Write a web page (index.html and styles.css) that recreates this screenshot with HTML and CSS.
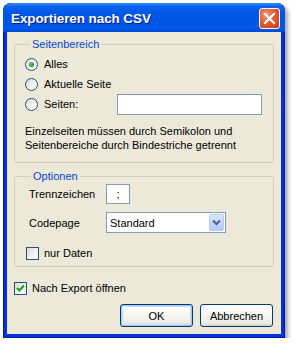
FILE: index.html
```html
<!DOCTYPE html>
<html lang="de">
<head>
<meta charset="utf-8">
<title>Exportieren nach CSV</title>
<link rel="stylesheet" href="styles.css">
</head>
<body>
<div class="window">
  <div class="titlebar">
    <span class="title">Exportieren nach CSV</span>
    <span class="close">
      <svg width="13" height="13" viewBox="0 0 13 13"><path d="M2 2 L11 11 M11 2 L2 11" stroke="#fff" stroke-width="2.2" stroke-linecap="square"/></svg>
    </span>
  </div>
  <div class="client">
    <fieldset class="group g1">
      <legend>Seitenbereich</legend>
      <div class="row"><span class="radio checked"></span><span>Alles</span></div>
      <div class="row"><span class="radio"></span><span>Aktuelle Seite</span></div>
      <div class="row"><span class="radio"></span><span class="seiten-label">Seiten:</span><span class="textbox wide"></span></div>
      <p class="hint">Einzelseiten müssen durch Semikolon und<br>Seitenbereiche durch Bindestriche getrennt</p>
    </fieldset>
    <fieldset class="group g2">
      <legend>Optionen</legend>
      <div class="opt-row"><span class="opt-label">Trennzeichen</span><span class="textbox small">;</span></div>
      <div class="opt-row combo-row"><span class="opt-label">Codepage</span>
        <span class="combo"><span class="combo-text">Standard</span>
          <span class="combo-btn"><svg width="9" height="7" viewBox="0 0 9 7"><path d="M1 1.5 L4.5 5 L8 1.5" fill="none" stroke="#4D6185" stroke-width="2"/></svg></span>
        </span>
      </div>
      <div class="check-row inner"><span class="check"></span><span>nur Daten</span></div>
    </fieldset>
    <div class="check-row outer"><span class="check"><svg width="11" height="11" viewBox="0 0 11 11"><path d="M2 5 L4.3 7.5 L9 2.5" fill="none" stroke="#21A121" stroke-width="2.2"/></svg></span><span>Nach Export öffnen</span></div>
    <div class="buttons">
      <button class="btn default">OK</button>
      <button class="btn">Abbrechen</button>
    </div>
  </div>
</div>
</body>
</html>
```
FILE: styles.css
```css
html, body {
  margin: 0;
  padding: 0;
  background: #ffffff;
}
body {
  font-family: "Liberation Sans", Arial, sans-serif;
  font-size: 11px;
  color: #000;
}
.window {
  margin: 3px 0 0 3px;
  width: 282px;
  height: 335px;
  border-radius: 8px 8px 0 0;
  background: #0831D9;
  box-shadow: 3px 3px 4px rgba(0, 0, 0, 0.35), inset 0 0 0 1px #0019A5;
  display: flex;
  flex-direction: column;
}
.titlebar {
  height: 29px;
  flex: none;
  border-radius: 8px 8px 0 0;
  background: linear-gradient(to bottom, #3D8EF8 0%, #0B63EC 12%, #0057E7 35%, #0055E5 70%, #0058EC 88%, #0246D4 100%);
  display: flex;
  align-items: center;
  justify-content: space-between;
  padding: 0 5px 0 8px;
  box-sizing: border-box;
}
.title {
  color: #fff;
  font-weight: bold;
  font-size: 13.5px;
  letter-spacing: -0.1px;
  text-shadow: 1px 1px 0 #0A1883;
  margin-top: 1px;
}
.close {
  width: 21px;
  height: 21px;
  box-sizing: border-box;
  border: 1px solid #fff;
  border-radius: 3px;
  background: radial-gradient(circle at 35% 30%, #F29B7E 0%, #E35A32 45%, #C8391A 100%);
  display: flex;
  align-items: center;
  justify-content: center;
  margin-top: 2px;
}
.close svg { display: block; }
.client {
  flex: 1;
  margin: 0 4px 4px 4px;
  background: #ECE9D8;
  padding: 5px 7px 0 7px;
  display: flex;
  flex-direction: column;
}
.group {
  margin: 0;
  border: 1px solid #D0D0BF;
  border-radius: 3px;
  padding: 0;
  min-width: 0;
}
.group legend {
  color: #0046D5;
  padding: 0 2px;
  margin-left: 5px;
  line-height: 14px;
}
.g1 {
  padding: 3px 0 10px 10px;
}
.row {
  height: 20px;
  display: flex;
  align-items: center;
}
.radio {
  width: 13px;
  height: 13px;
  box-sizing: border-box;
  border: 1px solid #1C5180;
  border-radius: 50%;
  background: linear-gradient(135deg, #DCD9CD 0%, #F3F2EC 55%, #FFFFFF 100%);
  margin-right: 6px;
  display: flex;
  align-items: center;
  justify-content: center;
  flex: none;
}
.radio.checked::after {
  content: "";
  width: 5px;
  height: 5px;
  border-radius: 50%;
  background: radial-gradient(circle at 40% 35%, #5FD35F 0%, #21A121 60%, #1A8A1A 100%);
}
.seiten-label {
  width: 73px;
}
.textbox {
  box-sizing: border-box;
  border: 1px solid #7F9DB9;
  background: #fff;
  display: inline-flex;
  align-items: center;
  justify-content: center;
}
.textbox.wide {
  width: 145px;
  height: 21px;
}
.hint {
  margin: 10px 0 0 0;
  line-height: 14px;
}
.g2 {
  margin-top: 6px;
  padding: 1px 0 6px 11px;
}
.opt-row {
  display: flex;
  align-items: center;
  height: 20px;
  padding-left: 3px;
}
.combo-row {
  margin-top: 8px;
  height: 21px;
}
.opt-label {
  width: 77px;
}
.textbox.small {
  width: 24px;
  height: 20px;
}
.combo {
  width: 120px;
  height: 21px;
  box-sizing: border-box;
  border: 1px solid #7F9DB9;
  background: #fff;
  display: flex;
  align-items: center;
  justify-content: space-between;
  padding: 0 1px 0 3px;
}
.combo-btn {
  width: 15px;
  height: 17px;
  box-sizing: border-box;
  border: 1px solid #BAC9F2;
  border-radius: 2px;
  background: linear-gradient(to bottom, #DDE7FF 0%, #C5D5FC 50%, #B3C8FA 100%);
  display: flex;
  align-items: center;
  justify-content: center;
}
.combo-btn svg { display: block; }
.check-row {
  display: flex;
  align-items: center;
  height: 14px;
}
.check-row.inner {
  margin-top: 13px;
}
.check {
  width: 13px;
  height: 13px;
  box-sizing: border-box;
  border: 1px solid #1C5180;
  background: linear-gradient(135deg, #DCD9CD 0%, #F3F2EC 55%, #FFFFFF 100%);
  margin-right: 5px;
  flex: none;
  display: flex;
  align-items: center;
  justify-content: center;
}
.check svg { display: block; }
.check-row.outer {
  margin-top: 14px;
}
.buttons {
  display: flex;
  justify-content: flex-end;
  gap: 7px;
  margin-top: 9px;
  padding-right: 1px;
}
.btn {
  width: 73px;
  height: 23px;
  box-sizing: border-box;
  border: 1px solid #003C74;
  border-radius: 3px;
  background: linear-gradient(to bottom, #FFFFFF 0%, #F6F5F0 50%, #ECEBE5 85%, #D6D0C5 100%);
  font-family: "Liberation Sans", Arial, sans-serif;
  font-size: 11px;
  color: #000;
  padding: 0;
}
.btn.default {
  box-shadow: inset 0 0 0 1px #A8C4F0, inset 0 0 0 2px #CFE0FA;
}
```
